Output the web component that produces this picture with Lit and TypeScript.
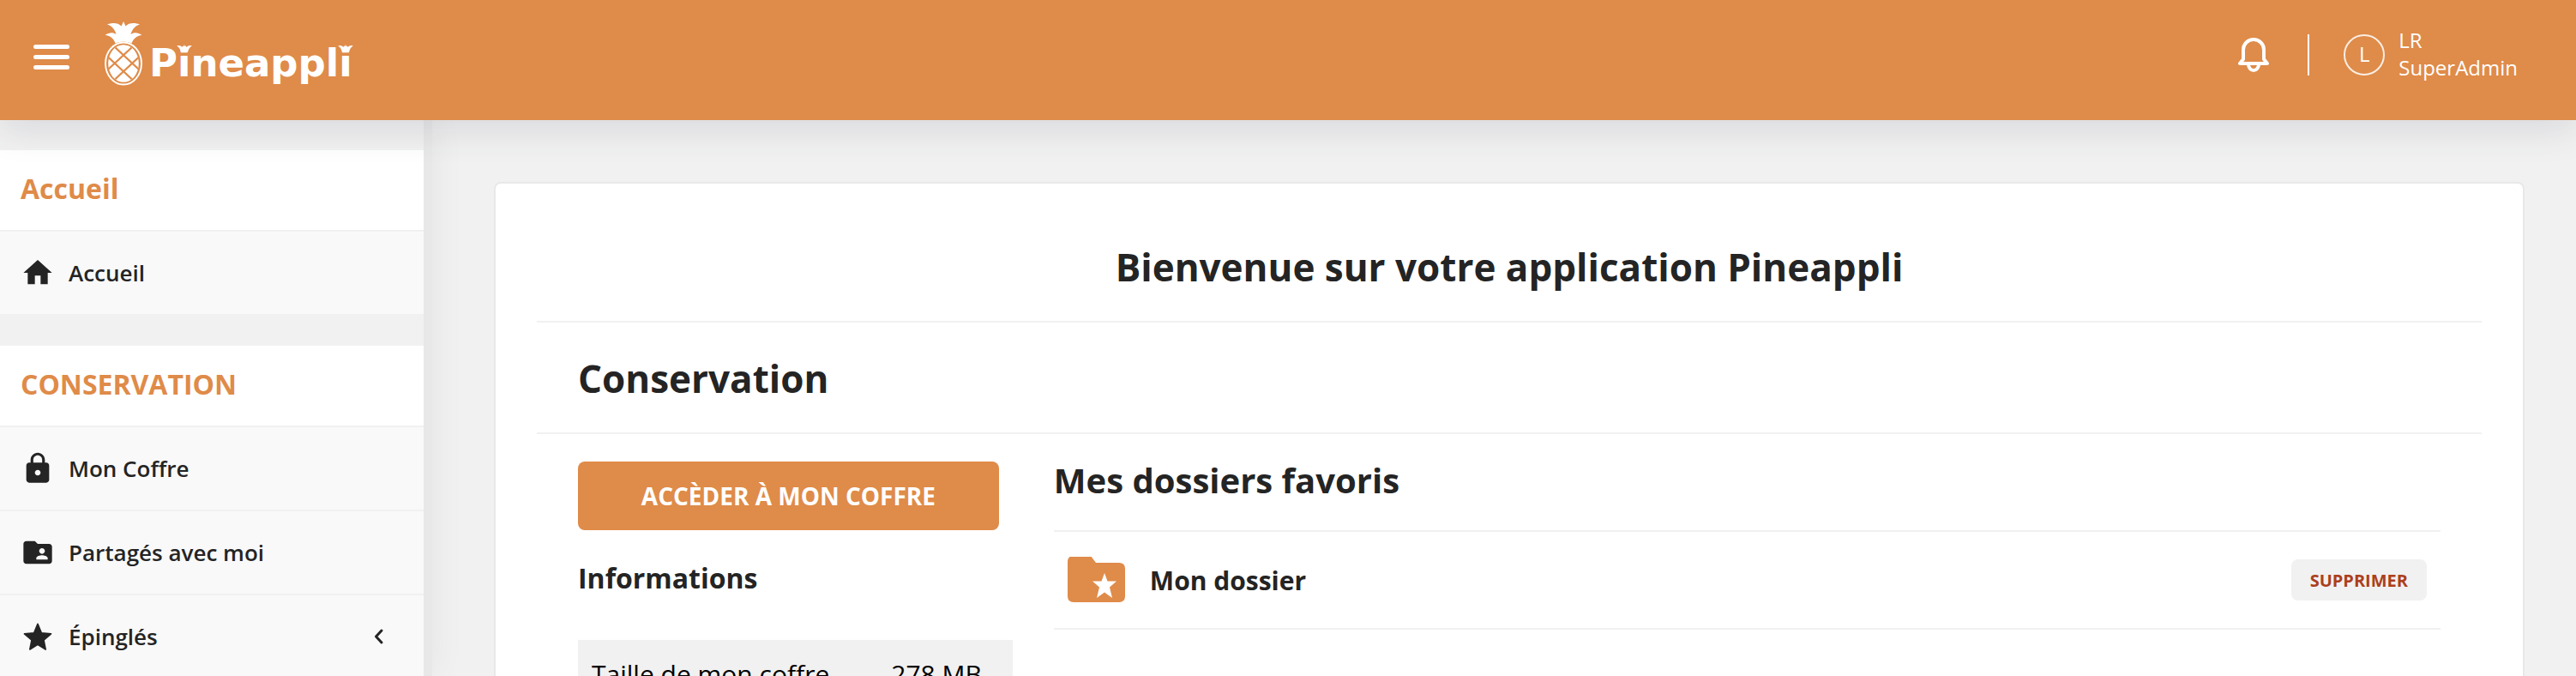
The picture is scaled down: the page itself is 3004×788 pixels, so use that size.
import { LitElement, html, css, svg } from "lit";
import { customElement } from "lit/decorators.js";

const icons = {
  home: svg`<path d="M10 20v-6h4v6h5v-8h3L12 3 2 12h3v8z"/>`,
  lock: svg`<path fill-rule="evenodd" d="M18 8h-1V6c0-2.76-2.24-5-5-5S7 3.24 7 6v2H6c-1.100 0-2 .9-2 2v10c0 1.100.9 2 2 2h12c1.100 0 2-.9 2-2V10c0-1.100-.9-2-2-2zm-6 9c-1.100 0-2-.9-2-2s.9-2 2-2 2 .9 2 2-.9 2-2 2zm3.100-9H8.900V6c0-1.710 1.390-3.100 3.100-3.100s3.100 1.390 3.100 3.100z"/>`,
  shared: svg`<path fill-rule="evenodd" d="M20 6h-8l-2-2H4c-1.100 0-2 .9-2 2v12c0 1.100.9 2 2 2h16c1.100 0 2-.9 2-2V8c0-1.100-.9-2-2-2zm-5 3c1.100 0 2 .9 2 2s-.9 2-2 2-2-.9-2-2 .9-2 2-2zm4 8h-8v-1c0-1.330 2.670-2 4-2s4 .67 4 2z"/>`,
  star: svg`<path stroke="currentColor" stroke-width="1" stroke-linejoin="round" d="M12 17.600l5.500 3.400-1.300-6.500 5.100-4.400-6.700-.6L12 3.200 9.400 9.500l-6.700.6 5.100 4.400L6.500 21z"/>`,
};

@customElement("pineappli-logo")
export class PineappliLogo extends LitElement {
  static styles = css`
    :host {
      display: flex;
      align-items: flex-start;
      color: #fff;
    }
    .fruit {
      width: 44px;
      height: 76px;
      flex: none;
    }
    .word {
      margin: 22px 0 0 8px;
      font: 700 45px/56px "DejaVu Sans", sans-serif;
    }
    .letter {
      position: relative;
      display: inline-block;
    }
    .crown {
      position: absolute;
      left: 50%;
      top: 6px;
      width: 18px;
      height: 9px;
      margin-left: -9px;
    }
  `;

  private letterI() {
    return html`<span class="letter">i<svg class="crown" viewBox="0 0 18 9" fill="currentColor" aria-hidden="true"><path d="M0 1.500Q4 0 6.500 3l.5-1.500L8.200 2 9 0l.8 2L11 1.500l.5 1.500Q14 0 18 1.500 14.500 3 13 8.500H5Q3.500 3 0 1.500z"/></svg></span>`;
  }

  render() {
    return html`
      <svg class="fruit" viewBox="0 0 44 76" aria-hidden="true">
        <path fill="#fff" d="M22 1l2.500 5.500C28 2.500 35 2 41 4.500c-6 2-9 6-10.500 11.500C34 13.500 39 13.500 43.500 17c-6 .5-10 4-12 9.500Q22 22.500 12.500 26.500C10.500 21 7 17.500.5 17 5 13.500 10 13.500 13.500 16 12 10.500 9 6.500 3 4.500 9 2 16 2.500 19.500 6.500z"/>
        <ellipse cx="22" cy="50" rx="21" ry="24.500" fill="#df8b49" stroke="#fff" stroke-width="1.900"/>
        <clipPath id="body"><ellipse cx="22" cy="50" rx="17.800" ry="21.800"/></clipPath>
        <ellipse cx="22" cy="50" rx="17.800" ry="21.800" fill="#fff"/>
        <path clip-path="url(#body)" stroke="#df8b49" stroke-width="2.200" d="M0 19.800L44 60.700M0 60.700L44 19.800M0 38.800L44 79.700M0 79.700L44 38.800"/>
      </svg>
      <div class="word">P${this.letterI()}neappl${this.letterI()}</div>
    `;
  }
}

@customElement("app-header")
export class AppHeader extends LitElement {
  static styles = css`
    :host {
      position: relative;
      z-index: 2;
      display: flex;
      align-items: flex-start;
      height: 140px;
      box-sizing: border-box;
      padding: 24px 68px 0 39px;
      background: #df8b49;
      color: #fff;
      box-shadow: 0 10px 40px rgba(60, 65, 85, 0.14);
    }
    button {
      border: 0;
      padding: 0;
      background: none;
      color: inherit;
      font: inherit;
      cursor: pointer;
    }
    .menu {
      display: flex;
      flex-direction: column;
      gap: 7px;
      margin-top: 28px;
    }
    .bar {
      width: 42px;
      height: 5px;
      border-radius: 3px;
      background: currentColor;
    }
    .logo {
      margin-left: 41px;
    }
    .tools {
      display: flex;
      align-items: center;
      height: 48px;
      margin: 16px 0 0 auto;
    }
    .bell svg {
      display: block;
      width: 36px;
      height: 40px;
    }
    .divider {
      width: 2px;
      height: 48px;
      margin: 0 40px 0 45px;
      background: #fff;
    }
    .user {
      display: flex;
      align-items: center;
      gap: 16px;
      font-size: 24px;
      line-height: 32px;
      text-align: left;
    }
    .avatar {
      width: 48px;
      height: 48px;
      box-sizing: border-box;
      border: 2px solid rgba(255, 255, 255, 0.85);
      border-radius: 50%;
      line-height: 42px;
      text-align: center;
    }
    .names {
      padding-bottom: 2px;
    }
    .name {
      display: block;
    }
  `;

  render() {
    return html`
      <button class="menu" aria-label="Menu">
        <span class="bar"></span><span class="bar"></span><span class="bar"></span>
      </button>
      <pineappli-logo class="logo"></pineappli-logo>
      <div class="tools">
        <button class="bell" aria-label="Notifications">
          <svg viewBox="0 0 36 40" fill="none" stroke="#fff" stroke-width="4" stroke-linejoin="round" aria-hidden="true">
            <path d="M2 30h32l-4-5V14a12 12 0 0 0-24 0v11z"/>
            <path d="M12 31a6 7 0 0 0 12 0"/>
          </svg>
        </button>
        <span class="divider"></span>
        <button class="user">
          <span class="avatar">L</span>
          <span class="names"><span class="name">LR</span><span class="name">SuperAdmin</span></span>
        </button>
      </div>
    `;
  }
}

@customElement("app-sidebar")
export class AppSidebar extends LitElement {
  static styles = css`
    :host {
      position: relative;
      z-index: 1;
      display: block;
      width: 504px;
      flex: none;
      box-sizing: border-box;
      border-right: 10px solid #e8e8e8;
      box-shadow: 0 0 40px rgba(0, 0, 0, 0.06);
      background: #f1f1f1;
    }
    .group {
      margin-top: 37px;
    }
    .group:first-child {
      margin-top: 35px;
    }
    h2 {
      margin: 0;
      padding: 23px 24px 26px;
      background: #fff;
      color: #df8b49;
      font-size: 32px;
      line-height: 44px;
      font-weight: 700;
    }
    .item {
      display: flex;
      align-items: center;
      height: 96px;
      padding: 0 46px 0 24px;
      border-top: 2px solid #f1f1f1;
      background: #f9f9f9;
      color: #242424;
      font-size: 26px;
      line-height: 36px;
      font-weight: 600;
      text-decoration: none;
    }
    .icon {
      width: 40px;
      height: 40px;
      margin-right: 16px;
      fill: currentColor;
    }
    .chevron {
      width: 12px;
      height: 20px;
      margin-left: auto;
    }
  `;

  private groups = [
    { title: "Accueil", items: [{ label: "Accueil", icon: icons.home, expandable: false }] },
    {
      title: "CONSERVATION",
      items: [
        { label: "Mon Coffre", icon: icons.lock, expandable: false },
        { label: "Partagés avec moi", icon: icons.shared, expandable: false },
        { label: "Épinglés", icon: icons.star, expandable: true },
      ],
    },
  ];

  render() {
    return html`${this.groups.map(
      (group) => html`
        <section class="group">
          <h2>${group.title}</h2>
          ${group.items.map(
            (item) => html`
              <a class="item" href="#">
                <svg class="icon" viewBox="0 0 24 24" aria-hidden="true">${item.icon}</svg>
                ${item.label}
                ${item.expandable
                  ? html`<svg class="chevron" viewBox="0 0 12 20" fill="none" stroke="currentColor" stroke-width="3" stroke-linecap="round" stroke-linejoin="round" aria-hidden="true"><path d="M9 3L2.500 10 9 17"/></svg>`
                  : ""}
              </a>
            `
          )}
        </section>
      `
    )}`;
  }
}

@customElement("app-dashboard")
export class AppDashboard extends LitElement {
  static styles = css`
    :host {
      display: block;
      flex: 1;
      min-width: 0;
      padding: 72px 60px 0 72px;
      color: #242424;
    }
    .card {
      min-height: 100%;
      box-sizing: border-box;
      padding: 0 48px;
      border: 2px solid #e8e8e8;
      border-radius: 8px;
      background: #fff;
    }
    h1,
    h2,
    h3 {
      margin: 0;
      font-weight: 700;
    }
    h1,
    .section-title {
      border-bottom: 2px solid #f1f1f1;
      font-size: 44px;
      line-height: 60px;
    }
    h1 {
      padding: 67px 0 33px;
      text-align: center;
    }
    .section-title {
      padding: 35px 48px 33px;
    }
    .columns {
      display: grid;
      grid-template-columns: 21fr 67fr;
      gap: 48px;
      padding: 32px 48px;
    }
    button {
      border: 0;
      border-radius: 8px;
      font-family: inherit;
      font-weight: 700;
      cursor: pointer;
    }
    .open {
      display: block;
      width: calc(100% - 16px);
      height: 80px;
      background: #df8b49;
      color: #fff;
      font-size: 28px;
    }
    .info-title {
      margin: 34px 0 50px;
      font-size: 32px;
      line-height: 44px;
    }
    table {
      width: 100%;
      border-collapse: collapse;
      background: #f1f1f1;
      color: #000;
      font-size: 30px;
      line-height: 40px;
    }
    th,
    td {
      padding: 20px 16px;
      font-weight: 400;
      text-align: left;
    }
    td {
      padding-right: 36px;
      text-align: right;
    }
    .favorites-title {
      padding-bottom: 36px;
      font-size: 40px;
      line-height: 44px;
    }
    .favorite {
      display: flex;
      align-items: center;
      height: 112px;
      padding: 0 16px;
      border: solid #f1f1f1;
      border-width: 2px 0;
      font-size: 30px;
      font-weight: 700;
    }
    .folder {
      width: 68px;
      height: 54px;
      margin-right: 28px;
    }
    .remove {
      height: 48px;
      margin-left: auto;
      padding: 0 22px;
      background: #f1f1f1;
      color: #ac3f1c;
      font-size: 20px;
    }
  `;

  render() {
    return html`
      <main class="card">
        <h1>Bienvenue sur votre application Pineappli</h1>
        <h2 class="section-title">Conservation</h2>
        <div class="columns">
          <section>
            <button class="open">ACCÈDER À MON COFFRE</button>
            <h3 class="info-title">Informations</h3>
            <table>
              <tr>
                <th scope="row">Taille de mon coffre</th>
                <td>278 MB</td>
              </tr>
            </table>
          </section>
          <section>
            <h2 class="favorites-title">Mes dossiers favoris</h2>
            <div class="favorite">
              <svg class="folder" viewBox="0 0 68 54" aria-hidden="true">
                <path fill="#df8b49" d="M7 -1h20l6 8h27q7 0 7 7v32q0 7-7 7H7q-7 0-7-7V6q0-7 7-7z"/>
                <path fill="#fff" d="M43 19l3.500 9.500H57l-8 7 3 12.500-9-6.500-9 6.500 3-12.500-8-7h10.500z"/>
              </svg>
              Mon dossier
              <button class="remove">SUPPRIMER</button>
            </div>
          </section>
        </div>
      </main>
    `;
  }
}

@customElement("app-root")
export class AppRoot extends LitElement {
  static styles = css`
    :host {
      display: flex;
      flex-direction: column;
      height: 100vh;
      overflow: hidden;
      background: #f1f1f1;
      font-family: "Open Sans", "Noto Sans", sans-serif;
    }
    .body {
      display: flex;
      flex: 1;
      min-height: 0;
    }
    svg {
      overflow: visible;
    }
  `;

  render() {
    return html`
      <app-header></app-header>
      <div class="body">
        <app-sidebar></app-sidebar>
        <app-dashboard></app-dashboard>
      </div>
    `;
  }
}
